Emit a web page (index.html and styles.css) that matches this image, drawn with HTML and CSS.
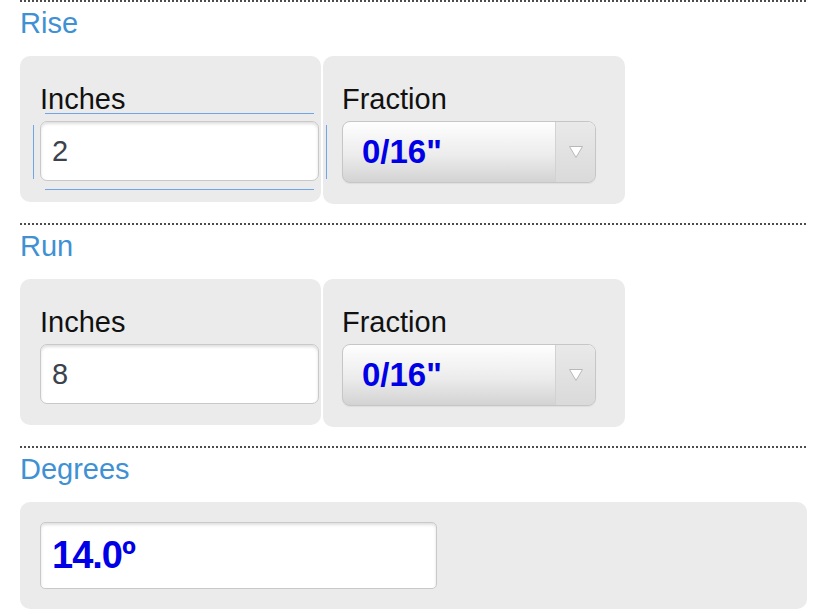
FILE: index.html
```html
<!DOCTYPE html>
<html lang="en">
<head>
<meta charset="utf-8">
<title>Rise / Run</title>
<link rel="stylesheet" href="styles.css">
</head>
<body>
<main class="page">
  <section class="group">
    <div class="rule"></div>
    <h2 class="group-title">Rise</h2>
    <div class="row">
      <div class="cell cell-inches">
        <span class="field-label">Inches</span>
        <div class="input-wrap focused"><div class="text-input">2</div></div>
      </div>
      <div class="cell cell-fraction">
        <span class="field-label">Fraction</span>
        <div class="select">
          <span class="select-value">0/16"</span>
          <span class="select-arrow"><svg width="16" height="14" viewBox="0 0 16 14"><path d="M1.5 1.5 H14.5 L8 12.5 Z" fill="#fff" stroke="#b8b8b8" stroke-width="1" stroke-linejoin="round"/></svg></span>
        </div>
      </div>
    </div>
  </section>

  <section class="group">
    <div class="rule"></div>
    <h2 class="group-title">Run</h2>
    <div class="row">
      <div class="cell cell-inches">
        <span class="field-label">Inches</span>
        <div class="input-wrap"><div class="text-input">8</div></div>
      </div>
      <div class="cell cell-fraction">
        <span class="field-label">Fraction</span>
        <div class="select">
          <span class="select-value">0/16"</span>
          <span class="select-arrow"><svg width="16" height="14" viewBox="0 0 16 14"><path d="M1.5 1.5 H14.5 L8 12.5 Z" fill="#fff" stroke="#b8b8b8" stroke-width="1" stroke-linejoin="round"/></svg></span>
        </div>
      </div>
    </div>
  </section>

  <section class="group">
    <div class="rule"></div>
    <h2 class="group-title">Degrees</h2>
    <div class="row">
      <div class="cell cell-wide">
        <div class="text-input result">14.0º</div>
      </div>
    </div>
  </section>
</main>
</body>
</html>
```

FILE: styles.css
```css
html, body {
  margin: 0;
  padding: 0;
  background: #ffffff;
}

body {
  font-family: "Liberation Sans", Arial, Helvetica, sans-serif;
  color: #111;
}

.page {
  padding: 0 21px 0 20px;
}

.group {
  margin-bottom: 19px;
}

.rule {
  height: 2px;
  background: repeating-linear-gradient(to right, #4d4d4d 0 2px, transparent 2px 4px);
}

.group-title {
  margin: 5px 0 17px 0;
  font-size: 29px;
  line-height: 32px;
  font-weight: normal;
  color: #3f91d3;
}

.row {
  display: flex;
  align-items: flex-start;
  gap: 2px;
}

.cell {
  box-sizing: border-box;
  background: #ebebeb;
  border-radius: 10px;
}

.cell-inches {
  width: 301px;
  padding: 27px 2px 21px 20px;
}

.cell-fraction {
  width: 302px;
  padding: 27px 29px 21px 19px;
}

.cell-wide {
  flex: 1;
  padding: 20px;
}

.field-label {
  display: block;
  font-size: 29px;
  line-height: 32px;
  color: #111;
  margin-bottom: 6px;
}

.input-wrap {
  position: relative;
}

.input-wrap.focused::before,
.input-wrap.focused::after {
  content: "";
  position: absolute;
  pointer-events: none;
  z-index: 2;
}

.input-wrap.focused::before {
  left: 5px;
  right: 5px;
  top: -8px;
  bottom: -9px;
  border-top: 1px solid #6fa6e8;
  border-bottom: 1px solid #6fa6e8;
}

.input-wrap.focused::after {
  left: -7px;
  right: -8px;
  top: 4px;
  bottom: 2px;
  border-left: 1px solid #6fa6e8;
  border-right: 1px solid #6fa6e8;
}

.text-input {
  box-sizing: border-box;
  height: 60px;
  border: 1px solid #c9c9c9;
  border-radius: 7px;
  background: #fff;
  box-shadow: inset 0 2px 3px rgba(0, 0, 0, 0.13);
  padding-left: 11px;
  font-size: 29px;
  line-height: 58px;
  color: #3b424d;
}

.text-input.result {
  width: 397px;
  height: 67px;
  border-radius: 5px;
  line-height: 65px;
  font-size: 38px;
  font-weight: bold;
  letter-spacing: -1px;
  color: #0000e6;
}

.select {
  box-sizing: border-box;
  display: flex;
  height: 62px;
  border: 1px solid #c6c6c6;
  border-radius: 8px;
  overflow: hidden;
  background: linear-gradient(to bottom, #fefefe 0%, #ececec 55%, #d3d3d3 100%);
  box-shadow: 0 1px 1px rgba(0, 0, 0, 0.06);
}

.select-value {
  flex: 1;
  padding-left: 19px;
  font-size: 33px;
  line-height: 60px;
  font-weight: bold;
  color: #0000e6;
}

.select-arrow {
  width: 39px;
  display: flex;
  align-items: center;
  justify-content: center;
  border-left: 1px solid #d2d2d2;
  background: linear-gradient(to bottom, #e9e9e9, #dadada);
}

.select-arrow svg {
  display: block;
}
```
